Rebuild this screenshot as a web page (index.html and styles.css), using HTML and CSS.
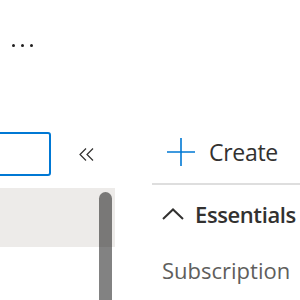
FILE: index.html
```html
<!DOCTYPE html>
<html lang="en">

<head>
    <meta charset="UTF-8">
    <meta name="viewport" content="width=device-width, initial-scale=1.0">
    <title>Resource group</title>
    <link rel="stylesheet" href="styles.css">
</head>

<body>
    <div class="page">
        <div class="nav">
            <div class="more">
                <span class="dot"></span>
                <span class="dot"></span>
                <span class="dot"></span>
            </div>
            <div class="search-row">
                <div class="search"></div>
                <button class="collapse" title="Collapse">
                    <svg width="15" height="13" viewBox="0 0 15 13">
                        <path d="M7 0.5 L1 6.5 L7 12.5 M14 0.5 L8 6.5 L14 12.5" fill="none" stroke="#323130" stroke-width="1.2" />
                    </svg>
                </button>
            </div>
            <div class="list">
                <div class="item selected"></div>
                <div class="item"></div>
            </div>
            <div class="thumb"></div>
        </div>
        <div class="main">
            <div class="toolbar">
                <svg class="plus" width="28" height="28" viewBox="0 0 28 28">
                    <path d="M14 0 V28 M0 14 H28" stroke="#0078d4" stroke-width="1.6" />
                </svg>
                <span class="create">Create</span>
            </div>
            <div class="essentials">
                <svg class="chevron" width="22" height="12" viewBox="0 0 22 12">
                    <path d="M1 11 L11 1.5 L21 11" fill="none" stroke="#323130" stroke-width="2" />
                </svg>
                <span>Essentials</span>
            </div>
            <div class="label">Subscription</div>
        </div>
    </div>
</body>

</html>
```

FILE: styles.css
```css
body {
    margin: 0;
    font-family: "Open Sans", "Noto Sans", sans-serif;
    color: #323130;
    background: #fff;
    overflow: hidden;
}

.page {
    display: flex;
    width: 300px;
    height: 300px;
    overflow: hidden;
}

.nav {
    position: relative;
    flex: none;
    width: 115px;
}

.more {
    display: flex;
    gap: 6px;
    padding: 44px 0 0 12px;
    height: 3px;
}

.dot {
    width: 3px;
    height: 3px;
    border-radius: 50%;
    background: #201f1e;
}

.search-row {
    display: flex;
    align-items: center;
    margin-top: 85px;
}

.search {
    box-sizing: border-box;
    width: 61px;
    height: 44px;
    margin-left: -10px;
    border: 2px solid #0078d4;
    border-radius: 3px;
}

.collapse {
    display: flex;
    margin-left: 28px;
    padding: 0;
    border: 0;
    background: none;
}

.list {
    margin-top: 12px;
}

.item {
    height: 59px;
}

.selected {
    background: #edebe9;
}

.thumb {
    position: absolute;
    top: 192px;
    left: 99px;
    width: 13px;
    height: 140px;
    border-radius: 7px;
    background: rgba(0, 0, 0, 0.49);
}

.main {
    flex: none;
    width: 148px;
    margin-left: 37px;
    overflow: hidden;
}

.toolbar {
    display: flex;
    align-items: center;
    gap: 14px;
    height: 44px;
    margin-top: 130px;
    padding-left: 15px;
    border-bottom: 2px solid #dedede;
    padding-bottom: 9px;
}

.create {
    font-size: 23px;
    letter-spacing: -0.3px;
}

.essentials {
    display: flex;
    align-items: center;
    gap: 11px;
    padding: 14px 0 0 10px;
    font-size: 22px;
    font-weight: 600;
    letter-spacing: -0.4px;
    white-space: nowrap;
}

.chevron {
    flex: none;
}

.label {
    margin-top: 26px;
    padding-left: 10px;
    font-size: 22px;
    color: #605e5c;
}
```
